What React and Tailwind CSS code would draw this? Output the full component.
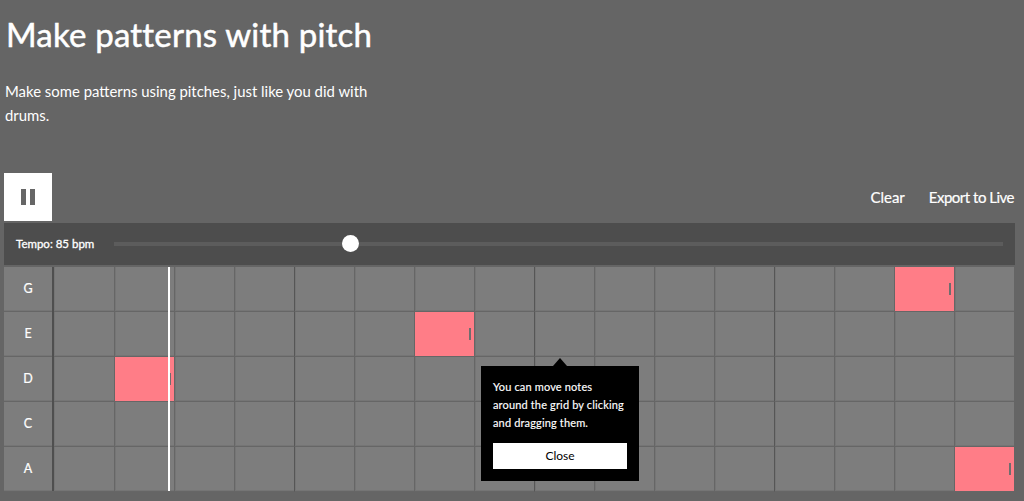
import React from "react";

const FONT = "font-['Lato','Open_Sans',sans-serif]";

const rows = ["G", "E", "D", "C", "A"];
const steps = Array.from({ length: 16 }, (_, i) => i);

// note position per row, by step index
const notes = { G: 14, E: 6, D: 1, A: 15 };

const Cell = ({ row, step }) => {
  const beat = step > 0 && step % 4 === 0;
  const hasNote = notes[row] === step;
  return (
    <div
      className={`h-[45px] border-b border-b-[#666666] bg-[#7d7d7d] shadow-[inset_1px_0_0_#757575,inset_0_-1px_0_#757575] ${
        step > 0 ? "border-l" : ""
      } ${beat ? "border-l-[#565656]" : "border-l-[#666666]"}`}
    >
      {hasNote ? (
        <div className="flex h-full w-full items-center justify-end bg-[#ff7d87] pr-[3px]">
          <div className="h-[12px] w-[2px] bg-[#6e6e6e]" />
        </div>
      ) : null}
    </div>
  );
};

const App = () => {
  return (
    <div className={`h-[501px] w-[1024px] overflow-hidden bg-[#656565] text-white ${FONT}`}>
      <div className="pl-[6px] pt-[12px]">
        <h1 className="text-[33px] leading-[44px] tracking-[0.2px] [-webkit-text-stroke:0.5px_white]">
          Make patterns with pitch
        </h1>
        <p className="mt-[23px] ml-[-1px] w-[372px] text-[14.9px] leading-[24px]">
          Make some patterns using pitches, just like you did with drums.
        </p>
      </div>

      <div className="mt-[46px] flex items-center justify-between pl-[4px] pr-[10px]">
        <button
          type="button"
          className="flex h-[48px] w-[48px] items-center justify-center gap-[4px] bg-white"
        >
          <span className="h-[16px] w-[5px] bg-[#666666]" />
          <span className="h-[16px] w-[5px] bg-[#666666]" />
        </button>
        <div className="flex gap-[24px] text-[15px] leading-[20px] [-webkit-text-stroke:0.2px_white]">
          <span>Clear</span>
          <span className="tracking-[-0.5px]">Export to Live</span>
        </div>
      </div>

      <div className="mt-[2px] ml-[4px] flex h-[42px] w-[1011px] items-center bg-[#4d4d4d] pl-[12px] pr-[12px]">
        <span className="w-[98px] text-[11.5px] [-webkit-text-stroke:0.3px_white]">
          Tempo: 85 bpm
        </span>
        <div className="relative h-[4px] flex-1 bg-[#5c5c5c]">
          <div className="absolute top-[-7px] left-[228px] h-[17px] w-[17px] rounded-full bg-white" />
        </div>
      </div>

      <div className="relative mt-[2px] ml-[4px] w-[1011px]">
        <div className="grid grid-cols-[50px_repeat(16,60px)]">
          {rows.map((row) => (
            <React.Fragment key={row}>
              <div className="flex h-[45px] items-center justify-center border-b border-b-[#666666] bg-[#7d7d7d] pr-[2px] text-[12.5px] shadow-[inset_0_-1px_0_#757575] [-webkit-text-stroke:0.2px_white]">
                {row}
              </div>
              {steps.map((step) => (
                <Cell key={step} row={row} step={step} />
              ))}
            </React.Fragment>
          ))}
        </div>

        {/* first column divider */}
        <div className="absolute top-0 left-[48px] h-[224px] w-[2px] bg-[#4f4f4f]" />

        {/* playhead */}
        <div className="absolute top-0 left-[164px] h-[224px] w-[2px] bg-white" />

        {/* tooltip */}
        <div className="absolute top-[99px] left-[477px] w-[158px] bg-black px-[12px] pt-[12px] pb-[12px] text-[11px] leading-[18px]">
          <div className="absolute top-[-8px] left-[72px] h-0 w-0 border-x-[7px] border-b-[8px] border-x-transparent border-b-black" />
          <p className="tracking-[0.15px] [-webkit-text-stroke:0.15px_white]">
            You can move notes around the grid by clicking and dragging them.
          </p>
          <button
            type="button"
            className="mt-[11px] block h-[26px] w-full bg-white text-[12px] text-black"
          >
            Close
          </button>
        </div>
      </div>
    </div>
  );
};

export default App;
